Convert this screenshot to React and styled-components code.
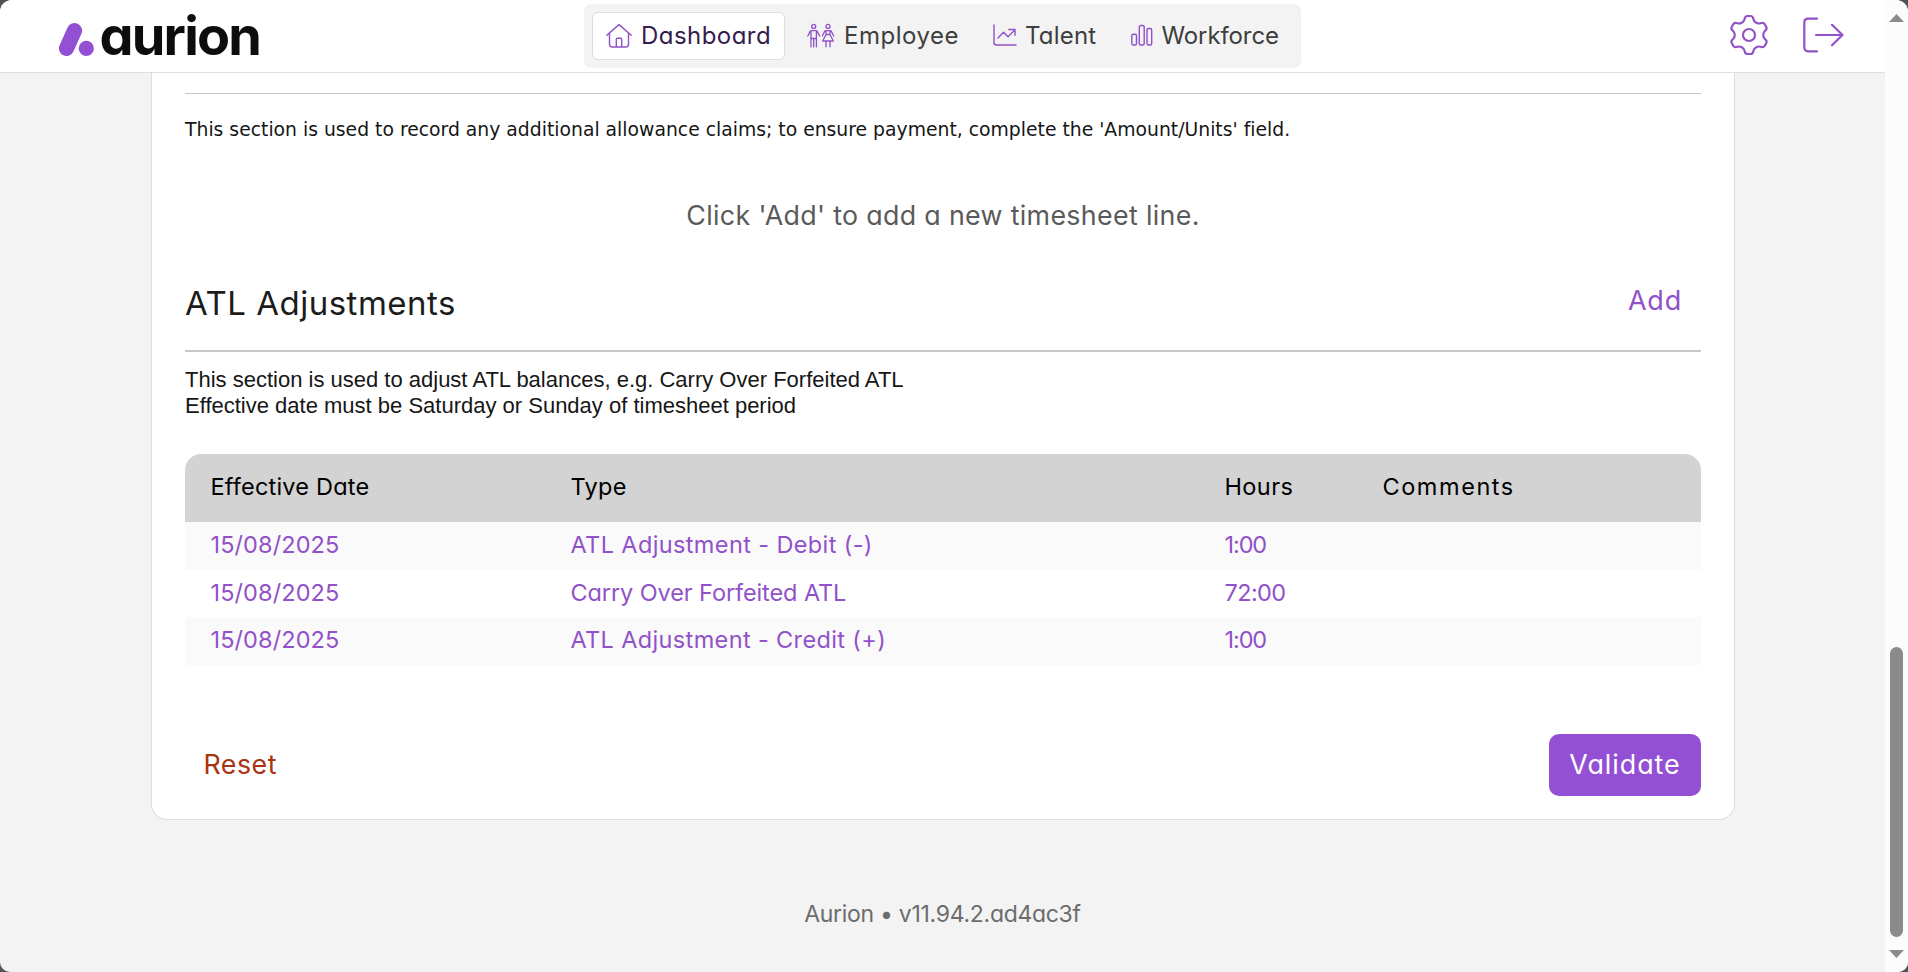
import React from 'react';
import styled, { createGlobalStyle } from 'styled-components';

const purple = '#9151c8';
const brand = '#9450d4';
const line = '#dcdedf';

const GlobalStyle = createGlobalStyle`
  *, *::before, *::after { box-sizing: border-box; }
  html, body { margin: 0; height: 100%; overflow: hidden; background: #505157; }
  body {
    font-family: Inter, "Open Sans", sans-serif;
    font-feature-settings: 'cv11' 1;
    color: #1c1c1c;
  }
  button { font: inherit; font-feature-settings: inherit; border: 0; background: none; padding: 0; cursor: pointer; }
`;

const Window = styled.div`
  display: flex;
  width: 100vw;
  height: 100vh;
  border-radius: 12px 12px 10px 10px;
  overflow: hidden;
  background: #f3f3f3;
`;

const Page = styled.div`
  flex: 1;
  display: flex;
  flex-direction: column;
  min-width: 0;
`;

const Header = styled.header`
  display: grid;
  grid-template-columns: 1fr 717px 1fr;
  align-items: center;
  height: 73px;
  background: #fff;
  border-bottom: 1px solid ${line};
`;

const Brand = styled.div`
  display: flex;
  align-items: center;
  height: 72px;
  padding-left: 58px;
  gap: 4.5px;
`;

const BrandName = styled.span`
  font-size: 54px;
  line-height: 72px;
  font-weight: 700;
  letter-spacing: ${(p) => p.$tracking}px;
  color: #0d0d0d;
`;

const Nav = styled.nav`
  display: flex;
  align-items: center;
  height: 64px;
  padding-left: 8px;
  border-radius: 7px;
  background: #f3f3f3;
`;

const NavItem = styled.a`
  display: flex;
  align-items: center;
  width: ${(p) => p.$width}px;
  height: 48px;
  padding-left: ${(p) => (p.$active ? 13 : 22)}px;
  gap: ${(p) => p.$gap}px;
  border: ${(p) => (p.$active ? `1px solid ${line}` : '0')};
  border-radius: 6px;
  background: ${(p) => (p.$active ? '#fff' : 'transparent')};
  color: ${(p) => (p.$active ? '#351c4f' : '#3d3e3e')};
  font-size: 24px;
  line-height: 46px;
  letter-spacing: ${(p) => p.$tracking}px;
  white-space: nowrap;
  svg { flex: none; }
`;

const Tools = styled.div`
  display: flex;
  justify-content: flex-end;
  align-items: center;
  gap: 33px;
  padding: 0 41px 2px 0;
`;

const Icon = styled.svg.attrs({ fill: 'none', strokeLinecap: 'round', strokeLinejoin: 'round' })`
  display: block;
  stroke: ${purple};
  stroke-width: ${(p) => p.$weight || 1.4};
`;

const Card = styled.main`
  width: 1584px;
  margin-left: 151px;
  padding: 20px 33px 23px;
  border: 1px solid ${line};
  border-top: 0;
  border-radius: 0 0 16px 16px;
  background: #fff;
`;

const Rule = styled.hr`
  height: 1px;
  margin: 0;
  border: 0;
  background: #c6c6c6;
`;

const AllowanceNote = styled.p`
  margin: 0;
  font-family: "DejaVu Sans", Verdana, sans-serif;
  font-size: 18.8px;
  line-height: 71px;
  font-variant-ligatures: none;
  white-space: nowrap;
  color: #161616;
`;

const EmptyMessage = styled.p`
  margin: 0;
  text-align: center;
  font-size: 26.8px;
  line-height: 101px;
  letter-spacing: 0.33px;
  color: #5a5a5a;
`;

const SectionHeader = styled.div`
  display: flex;
  justify-content: space-between;
  align-items: flex-start;
  height: 86px;
  padding-right: 19px;
  border-bottom: 2px solid #c6c6c6;
`;

const SectionTitle = styled.h2`
  margin: 0;
  font-size: 33px;
  font-weight: 400;
  line-height: 75px;
  letter-spacing: 0.5px;
`;

const AddButton = styled.button`
  font-size: 27px;
  line-height: 69px;
  letter-spacing: 0.8px;
  color: ${purple};
`;

const SectionNote = styled.p`
  margin: 0;
  padding: 15px 0 35px;
  font-family: "Liberation Sans", Arial, sans-serif;
  font-size: 22px;
  line-height: 26px;
  color: #161616;
`;

const Grid = styled.div`
  border-radius: 16px 16px 0 0;
  overflow: hidden;
`;

const Row = styled.div`
  display: grid;
  grid-template-columns: 360px 654px 158px 1fr;
  height: ${(p) => p.$height}px;
  line-height: ${(p) => p.$height - 2}px;
  background: ${(p) => p.$fill};
  color: ${(p) => (p.$head ? '#000' : purple)};
`;

const Cell = styled.div`
  padding-left: 25.5px;
  font-size: 23.5px;
  letter-spacing: ${(p) => p.$tracking}px;
  white-space: nowrap;
`;

const Actions = styled.div`
  display: flex;
  justify-content: space-between;
  height: 62px;
  margin-top: 69px;
  font-size: 26.8px;
  line-height: 60px;
`;

const ActionLabel = styled.span`
  display: block;
  height: 62px;
`;

const ResetButton = styled.button`
  padding-left: 18.5px;
  letter-spacing: 0.5px;
  color: #a93413;
`;

const ValidateButton = styled.button`
  width: 152px;
  border-radius: 10px;
  background: ${brand};
  color: #fff;
  letter-spacing: 1px;
`;

const Version = styled.footer`
  margin-top: 65px;
  text-align: center;
  font-size: 23px;
  line-height: 59px;
  letter-spacing: -0.3px;
  color: #6c6c6c;
`;

const Scrollbar = styled.div`
  display: flex;
  flex-direction: column;
  align-items: center;
  justify-content: space-between;
  width: 23px;
  padding: 14px 0;
  background: #fcfcfc;
`;

const Arrow = styled.i`
  width: 15px;
  height: 8px;
  background: #8b8b8b;
  clip-path: ${(p) => (p.$up ? 'polygon(50% 0, 100% 100%, 0 100%)' : 'polygon(0 0, 100% 0, 50% 100%)')};
`;

const Thumb = styled.div`
  width: 13px;
  height: 290px;
  margin: auto 0 13px;
  border-radius: 7px;
  background: #8b8b8b;
`;

const HomeIcon = () => (
  <Icon width="26" height="26" viewBox="0 0 26 26">
    <path d="M.8 12.2 13 1.6l12.2 10.6M3.5 10.2V21.3q0 2.7 2.7 2.7h13.6q2.7 0 2.7-2.7V10.2M10.3 24v-7.7q0-1 1-1h3.4q1 0 1 1V24" />
  </Icon>
);

const PeopleIcon = () => (
  <Icon width="28" height="26" viewBox="0 0 28 26" $weight={1.3}>
    <circle cx="6.7" cy="3.4" r="2" />
    <circle cx="21" cy="3.4" r="2" />
    <path d="M.8 13 3 8.600q.5-1 1.500-1h4.400q1 0 1.500 1l2.200 4.400M4 8.500v15.300M9.400 8.500v15.300M6.700 15.800v8M4 15.500h5.400" />
    <path d="m15.300 13 2.200-4.400q.5-1 1.500-1h4q1 0 1.500 1l2.200 4.400M19 8.300v3.200L15.700 18h10.600L23 11.500V8.300M19 18v5.800M23 18v5.800M19 11.500h4" />
  </Icon>
);

const TrendIcon = () => (
  <Icon width="24" height="24" viewBox="0 0 24 24">
    <path d="M1 1v17.500Q1 21 3.500 21H23M5 14l5.500-5.700 4.500 4.500 7-7M15.800 5.500H22v5.700" />
  </Icon>
);

const BarsIcon = () => (
  <Icon width="22" height="24" viewBox="0 0 22 24">
    <rect x=".8" y="10.200" width="4.700" height="10.800" rx="1.500" />
    <rect x="8.300" y="1.500" width="4.900" height="19.500" rx="1.500" />
    <rect x="16" y="4.500" width="4.700" height="16.500" rx="1.500" />
  </Icon>
);

const gearPath = (() => {
  const tooth = [[-3.6, -19], [3.6, -19], [5, -13.6], [-5, -13.6]];
  const points = [];
  for (let i = 0; i < 6; i += 1) {
    const turn = (i * Math.PI) / 3;
    const at = ([x, y], a) => [x * Math.cos(a) - y * Math.sin(a), x * Math.sin(a) + y * Math.cos(a)];
    points.push(at(tooth[0], turn), at(tooth[1], turn), at(tooth[2], turn), at(tooth[3], turn + Math.PI / 3));
  }
  const toward = (a, b, d) => {
    const k = d / Math.hypot(b[0] - a[0], b[1] - a[1]);
    return [a[0] + (b[0] - a[0]) * k, a[1] + (b[1] - a[1]) * k];
  };
  const n = points.length;
  return `${points
    .map((p, i) => {
      const start = toward(p, points[(i + n - 1) % n], 2.2);
      const end = toward(p, points[(i + 1) % n], 2.2);
      return `${i ? 'L' : 'M'}${start} Q${p} ${end}`;
    })
    .join(' ')}Z`;
})();

const GearIcon = () => (
  <Icon width="40" height="42" viewBox="-20 -21 40 42" $weight={2.2}>
    <path d={gearPath} />
    <circle r="6" />
  </Icon>
);

const ExitIcon = () => (
  <Icon width="42" height="38" viewBox="0 0 42 38" $weight={2.2}>
    <path d="M15 2.700H6.300q-4 0-4 4v24.600q0 4 4 4H15M14 19h26.500M30 8.800 40.500 19 30 29.200" />
  </Icon>
);

const BrandMark = () => (
  <svg width="37" height="72" viewBox="0 0 37 72">
    <path d="M16.500 30.700 8.500 48.400" stroke={brand} strokeWidth="15.200" strokeLinecap="round" />
    <circle cx="28.300" cy="48.400" r="7.600" fill={brand} />
  </svg>
);

const entries = [
  { type: 'ATL Adjustment - Debit (-)', tracking: 0.38, hours: '1:00', fill: '#fafafb', height: 48 },
  { type: 'Carry Over Forfeited ATL', tracking: -0.1, hours: '72:00', fill: '#fff', height: 47 },
  { type: 'ATL Adjustment - Credit (+)', tracking: 0.36, hours: '1:00', fill: '#fafafb', height: 48 },
];

export default function App() {
  return (
    <>
      <GlobalStyle />
      <Window>
        <Page>
          <Header>
            <Brand>
              <BrandMark />
              <BrandName $tracking={-1.8}>aurion</BrandName>
            </Brand>
            <Nav>
              <NavItem $active $width={193} $gap={9} $tracking={0.45}><HomeIcon />Dashboard</NavItem>
              <NavItem $width={186} $gap={9} $tracking={0.5}><PeopleIcon />Employee</NavItem>
              <NavItem $width={138} $gap={8} $tracking={0.2}><TrendIcon />Talent</NavItem>
              <NavItem $width={184} $gap={8.5} $tracking={-0.1}><BarsIcon />Workforce</NavItem>
            </Nav>
            <Tools>
              <GearIcon />
              <ExitIcon />
            </Tools>
          </Header>
          <Card>
            <Rule />
            <AllowanceNote>
              This section is used to record any additional allowance claims; to ensure payment, complete the 'Amount/Units' field.
            </AllowanceNote>
            <EmptyMessage>Click 'Add' to add a new timesheet line.</EmptyMessage>
            <SectionHeader>
              <SectionTitle>ATL Adjustments</SectionTitle>
              <AddButton>Add</AddButton>
            </SectionHeader>
            <SectionNote>
              This section is used to adjust ATL balances, e.g. Carry Over Forfeited ATL
              <br />
              Effective date must be Saturday or Sunday of timesheet period
            </SectionNote>
            <Grid>
              <Row $head $height={68} $fill="#d3d3d3">
                <Cell $tracking={0.2}>Effective Date</Cell>
                <Cell $tracking={0.35}>Type</Cell>
                <Cell $tracking={0.4}>Hours</Cell>
                <Cell $tracking={1.55}>Comments</Cell>
              </Row>
              {entries.map((entry) => (
                <Row key={entry.type} $height={entry.height} $fill={entry.fill}>
                  <Cell $tracking={0.1}>15/08/2025</Cell>
                  <Cell $tracking={entry.tracking}>{entry.type}</Cell>
                  <Cell $tracking={entry.hours.length > 4 ? -0.6 : -1.1}>{entry.hours}</Cell>
                  <Cell />
                </Row>
              ))}
            </Grid>
            <Actions>
              <ResetButton><ActionLabel>Reset</ActionLabel></ResetButton>
              <ValidateButton><ActionLabel>Validate</ActionLabel></ValidateButton>
            </Actions>
          </Card>
          <Version>Aurion • v11.94.2.ad4ac3f</Version>
        </Page>
        <Scrollbar>
          <Arrow $up />
          <Thumb />
          <Arrow />
        </Scrollbar>
      </Window>
    </>
  );
}
